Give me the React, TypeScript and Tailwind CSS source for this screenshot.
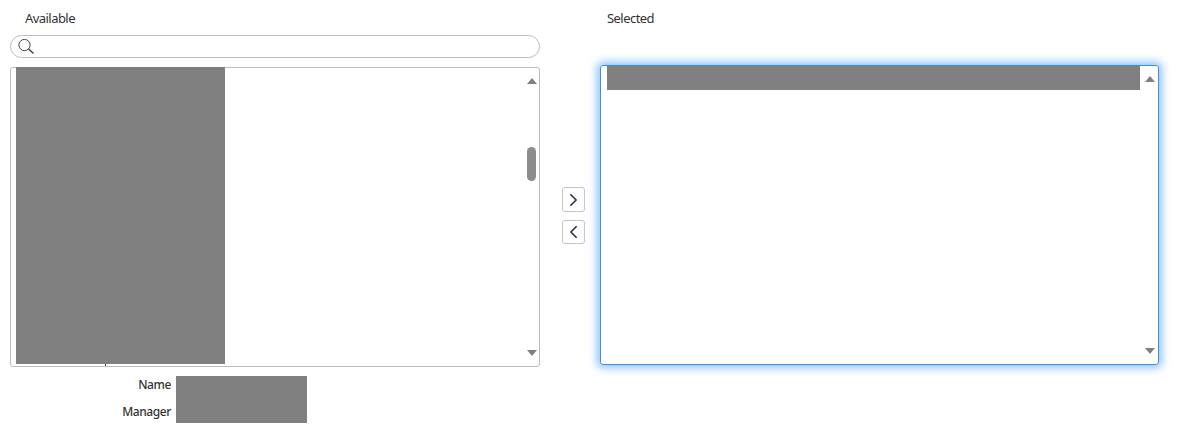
import { ChevronLeft, ChevronRight } from 'lucide-react';

function ArrowUp() {
  return <div className="w-0 h-0 border-x-[5px] border-x-transparent border-b-[6px] border-b-[#808080]" />;
}

function ArrowDown() {
  return <div className="w-0 h-0 border-x-[5px] border-x-transparent border-t-[6px] border-t-[#808080]" />;
}

function SearchIcon() {
  return (
    <svg width="18" height="18" viewBox="0 0 18 18" fill="none" stroke="#3f4650" className="shrink-0">
      <circle cx="7.5" cy="7" r="5.6" strokeWidth="1" />
      <path d="M11.6 11 L16.5 15.5" strokeWidth="1.6" />
    </svg>
  );
}

function MoveButton({ children, className }: { children: React.ReactNode; className: string }) {
  return (
    <button className={`w-[23px] border border-[#c6c6c6] rounded-[3px] bg-white flex items-center justify-center text-[#2e3640] ${className}`}>
      {children}
    </button>
  );
}

export default function App() {
  return (
    <div className="w-[1181px] h-[434px] bg-white flex pl-[10px] text-[#333] text-[13px] font-['Noto_Sans','Open_Sans',sans-serif] overflow-hidden">
      <div className="w-[530px] shrink-0 flex flex-col">
        <div className="h-[35px] pl-[15px] pt-[9px] leading-[18px] tracking-[-0.55px]">Available</div>
        <div className="h-[23px] border border-[#bdbdbd] rounded-full flex items-center pl-[6px]">
          <SearchIcon />
        </div>
        <div className="mt-[9px] h-[300px] border border-[#bdbdbd] rounded-[3px] flex">
          <div className="flex flex-col -mt-px">
            <div className="ml-[5px] w-[209px] h-[297px] bg-[#808080]" />
            <div className="ml-[94px] w-px h-[2px] bg-[#555]" />
          </div>
          <div className="ml-auto w-[13px] mr-[1px] flex flex-col items-center pt-[10px] pb-[10px]">
            <ArrowUp />
            <div className="mt-[63px] w-[9px] h-[34px] rounded-full bg-[#8c8c8c]" />
            <div className="mt-auto"><ArrowDown /></div>
          </div>
        </div>
        <div className="mt-[9px] flex">
          <div className="w-[161px] text-right text-[12px] font-medium tracking-[-0.4px]">
            <div className="h-[18px] leading-[18px]">Name</div>
            <div className="mt-[9px] h-[18px] leading-[18px]">Manager</div>
          </div>
          <div className="ml-[5px] w-[131px] h-[47px] bg-[#808080]" />
        </div>
      </div>

      <div className="w-[60px] shrink-0 flex flex-col pl-[22px] pt-[187px]">
        <MoveButton className="h-[25px]"><ChevronRight size={22} strokeWidth={2} /></MoveButton>
        <MoveButton className="h-[24px] mt-[8px]"><ChevronLeft size={22} strokeWidth={2} /></MoveButton>
      </div>

      <div className="w-[559px] shrink-0 flex flex-col">
        <div className="h-[65px] pl-[7px] pt-[9px] leading-[18px] tracking-[-0.55px]">Selected</div>
        <div className="h-[300px] border border-[#3f8fdc] rounded-[3px] shadow-[0_0_8px_3px_rgba(90,170,250,0.7)] flex">
          <div className="ml-[6px] w-[533px] h-[24px] bg-[#808080]" />
          <div className="ml-auto w-[14px] mr-[1px] flex flex-col items-center pt-[10px] pb-[10px]">
            <ArrowUp />
            <div className="mt-auto"><ArrowDown /></div>
          </div>
        </div>
      </div>
    </div>
  );
}
